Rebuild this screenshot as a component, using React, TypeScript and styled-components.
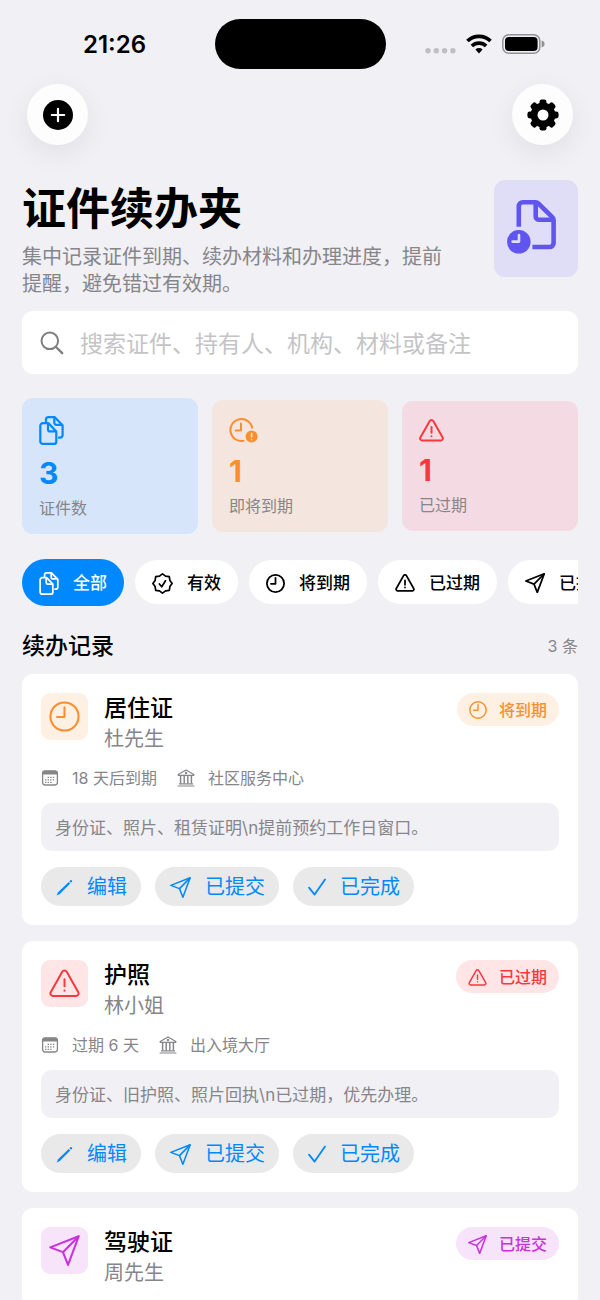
import React from "react";
import styled, { createGlobalStyle } from "styled-components";

const GlobalStyle = createGlobalStyle`
  *, *::before, *::after { box-sizing: border-box; }
  html, body { margin: 0; background: #f1f0f5; }
  body, button, input {
    font-family: Inter, "Noto Sans CJK SC", sans-serif;
  }
  h1, h2, h3, p { margin: 0; font-weight: 400; }
  button { border: 0; padding: 0; cursor: pointer; }
  svg { display: block; flex: none; }
`;

const color = {
  blue: "#0088ff",
  orange: "#fb8f2d",
  red: "#fa373c",
  purple: "#c832dc",
  indigo: "#6155f0",
  gray: "#868589",
};

/* ---------- icons ---------- */

type IconProps = { size: number; weight?: number };

const CopiesIcon = ({ size, weight = 2.2 }: IconProps) => (
  <svg width={Math.round((size * 25) / 29)} height={size} viewBox="0 0 25 29" fill="none" stroke="currentColor" strokeWidth={weight} strokeLinejoin="round" aria-hidden="true">
    <path d="M3.8 7.2H9.5l7.8 8.2v10a2.5 2.5 0 0 1-2.5 2.5h-11a2.5 2.5 0 0 1-2.500-2.500V9.700a2.500 2.500 0 0 1 2.500-2.500z" />
    <path d="M9 7.400v6a2 2 0 0 0 2 2h6" />
    <path d="M7 6.600V3.600A2.500 2.500 0 0 1 9.500 1.100h6l8.100 8.200v9.800a2.500 2.500 0 0 1-2.500 2.500h-2" />
    <path d="M15.300 1.200v5.600a2 2 0 0 0 2 2h6" />
  </svg>
);

const ClockIcon = ({ size, weight = 2 }: IconProps) => (
  <svg width={size} height={size} viewBox="0 0 30 30" fill="none" stroke="currentColor" strokeWidth={weight} strokeLinecap="round" strokeLinejoin="round" aria-hidden="true">
    <circle cx="15" cy="15" r="13.6" />
    <path d="M15 6v9.5H7.8" />
  </svg>
);

const ClockAlertIcon = () => (
  <svg width="29" height="25" viewBox="0 0 29 25" fill="none" stroke="currentColor" strokeWidth="2" strokeLinecap="round" strokeLinejoin="round" aria-hidden="true">
    <path d="M23.3 10.500A11 11 0 1 0 15.400 22.600" strokeLinecap="butt" />
    <path d="M12 5.400v7.200H6.600" />
    <circle cx="22.600" cy="18.600" r="6" fill="currentColor" stroke="none" />
    <path d="M22.600 15.400v3.400M22.600 21.600v.1" stroke="#f4e6de" strokeWidth="1.600" />
  </svg>
);

const WarningIcon = ({ size, weight = 2 }: IconProps) => (
  <svg width={size} height={Math.round((size * 23) / 25)} viewBox="0 0 25 23" fill="none" stroke="currentColor" strokeWidth={weight} strokeLinecap="round" strokeLinejoin="round" aria-hidden="true">
    <path d="M10.7 2.1a2.1 2.1 0 0 1 3.6 0l9.3 16.4a2.1 2.1 0 0 1-1.9 3.1H3.3a2.1 2.1 0 0 1-1.9-3.1z" />
    <path d="M12.5 8v5.8M12.5 17.2v.1" />
  </svg>
);

const sealPoints = Array.from({ length: 16 }, (_, i) => {
  const radius = i % 2 === 0 ? 9.6 : 8;
  const angle = (i * Math.PI) / 8;
  return `${(10.5 + radius * Math.sin(angle)).toFixed(2)},${(10.5 - radius * Math.cos(angle)).toFixed(2)}`;
}).join(" ");

const SealIcon = () => (
  <svg width="21" height="21" viewBox="0 0 21 21" fill="none" stroke="currentColor" strokeWidth="1.7" strokeLinecap="round" strokeLinejoin="round" aria-hidden="true">
    <polygon points={sealPoints} />
    <path d="M7.4 11l2.3 2.8 3.8-6" />
  </svg>
);

const PlaneIcon = ({ size, weight = 2 }: IconProps) => (
  <svg width={size} height={size} viewBox="0 0 30 30" fill="none" stroke="currentColor" strokeWidth={weight} strokeLinejoin="round" aria-hidden="true">
    <path d="M28.8 1.2L1.2 12l12.3 4.6L18.4 29z" />
    <path d="M28.8 1.2L13.5 16.6" />
  </svg>
);

const PencilIcon = () => (
  <svg width="17" height="17" viewBox="0 0 17 17" fill="currentColor" aria-hidden="true">
    <path d="M.6 16.4l1.500-3.200L12.700 2.900l1.500 1.500L3.800 14.900z" />
    <path d="M13.400 2.200l.9-.9a1 1 0 0 1 1.400 0l.2.2a1 1 0 0 1 0 1.400l-.9.9z" />
  </svg>
);

const CheckIcon = () => (
  <svg width="18" height="18" viewBox="0 0 18 18" fill="none" stroke="currentColor" strokeWidth="1.8" strokeLinecap="round" strokeLinejoin="round" aria-hidden="true">
    <path d="M1 9.6l5.6 7L17 1.4" />
  </svg>
);

const CalendarIcon = () => (
  <svg width="18" height="16" viewBox="0 0 18 16" fill="none" aria-hidden="true">
    <rect x="1.6" y=".8" width="14.8" height="14.2" rx="2.4" stroke="currentColor" strokeWidth="1.3" />
    <path d="M1.6 4.6V3.2A2.4 2.4 0 0 1 4 .8h10a2.4 2.4 0 0 1 2.4 2.4v1.4z" fill="currentColor" />
    <path d="M6.6 7.4h7M4 9.9h9.6M4 12.4h7" stroke="currentColor" strokeWidth="1.3" strokeDasharray="1.4 1.2" />
  </svg>
);

const InstitutionIcon = () => (
  <svg width="18" height="18" viewBox="0 0 18 18" fill="none" stroke="currentColor" strokeWidth="1.2" strokeLinejoin="round" aria-hidden="true">
    <path d="M1.2 5.4L9 1l7.8 4.4v.9H1.2z" />
    <path d="M3.6 6.4v8.2M7.2 6.4v8.2M10.8 6.4v8.2M14.4 6.4v8.2" strokeWidth="1.5" />
    <path d="M2 14.8h14M.6 17h16.8" />
    <circle cx="9" cy="4" r=".6" />
  </svg>
);

const SearchIcon = () => (
  <svg width="24" height="24" viewBox="0 0 24 24" fill="none" stroke="#7f7f82" strokeWidth="2" strokeLinecap="round" aria-hidden="true">
    <circle cx="9.8" cy="9.8" r="8.3" />
    <path d="M16 16l6.2 6.2" strokeWidth="2.4" />
  </svg>
);

const DocClockIcon = () => (
  <svg width="49" height="54" viewBox="0 0 49 54" fill="none" stroke="currentColor" strokeWidth="4.6" strokeLinejoin="round" aria-hidden="true">
    <path d="M11.8 26.8V6.3a4 4 0 0 1 4-4h12.9c1 0 1.9.4 2.6 1.1l14.2 14c.7.7 1.1 1.6 1.1 2.6v23a4 4 0 0 1-4 4H25.4" />
    <path d="M28.7 3v13.4a3.4 3.4 0 0 0 3.4 3.4H46" />
    <circle cx="11.8" cy="41.8" r="11.8" fill="currentColor" stroke="none" />
    <path d="M12 35v6.6H5.6" stroke="#e0def6" strokeWidth="2.6" strokeLinecap="round" />
  </svg>
);

const PlusDiscIcon = () => (
  <svg width="30" height="30" viewBox="0 0 30 30" aria-hidden="true">
    <circle cx="15" cy="15" r="15" fill="#000" />
    <path d="M15 8.8v12.4M8.8 15h12.400" stroke="#fdfdfe" strokeWidth="2.2" strokeLinecap="round" />
  </svg>
);

const GearIcon = () => (
  <svg width="32" height="32" viewBox="0 0 32 32" aria-hidden="true">
    {[0, 45, 90, 135].map((angle) => (
      <rect key={angle} x="12.5" y=".4" width="7" height="31.2" rx="2.4" transform={`rotate(${angle} 16 16)`} />
    ))}
    <circle cx="16" cy="16" r="12.4" />
    <circle cx="16" cy="16" r="5.5" fill="#fdfdfe" />
  </svg>
);

const SignalDots = () => (
  <svg width="31" height="20" viewBox="0 0 31 20" fill="#bfbfc4" aria-hidden="true">
    {[3, 11.3, 19.6, 27.9].map((x) => (
      <circle key={x} cx={x} cy="16.7" r="2.7" />
    ))}
  </svg>
);

const WifiIcon = () => (
  <svg width="26" height="20" viewBox="0 0 26 20" fill="none" stroke="#000" strokeWidth="3.7" aria-hidden="true">
    <path d="M1.5 7a16.4 16.4 0 0 1 23 0" />
    <path d="M5.9 12a10.1 10.1 0 0 1 14.2 0" />
    <path d="M13 19.4l-3.6-3.8a5.1 5.1 0 0 1 7.2 0z" fill="#000" stroke="none" />
  </svg>
);

const BatteryIcon = () => (
  <svg width="43" height="20" viewBox="0 0 43 20" aria-hidden="true">
    <rect x=".8" y=".8" width="37" height="18.4" rx="6" fill="none" stroke="#929296" strokeWidth="1.5" />
    <rect x="3" y="3" width="32.6" height="14" rx="4" />
    <path d="M39.6 6.6c2 .6 3 1.8 3 3.4s-1 2.8-3 3.4z" fill="#929296" />
  </svg>
);

/* ---------- page ---------- */

const Screen = styled.div`
  height: 100vh;
  overflow-y: auto;
  scrollbar-width: none;
  background: #f1f0f5;
  color: #000;
`;

const StatusBar = styled.div`
  display: grid;
  grid-template-columns: 1fr auto 1fr;
  align-items: center;
  padding: 19px 55px 0 83px;
`;

const Time = styled.time`
  padding-top: 2px;
  font-size: 24px;
  line-height: 30px;
  font-weight: 600;
`;

const Island = styled.div`
  width: 171px;
  height: 50px;
  margin-right: 28px;
  border-radius: 25px;
  background: #000;
`;

const StatusIcons = styled.div`
  display: flex;
  justify-content: flex-end;
  gap: 10px;
`;

const Toolbar = styled.nav`
  display: flex;
  justify-content: space-between;
  padding: 15px 27px 0;
`;

const RoundButton = styled.button`
  display: grid;
  place-items: center;
  width: 61px;
  height: 61px;
  border-radius: 50%;
  background: #fdfdfe;
  box-shadow: 0 8px 28px rgba(0, 0, 0, 0.07);
`;

const Content = styled.main`
  padding: 35px 22px 22px;
`;

const Hero = styled.header`
  display: flex;
  align-items: flex-start;
  justify-content: space-between;
  gap: 36px;
`;

const Title = styled.h1`
  font-size: 44px;
  line-height: 58px;
  font-weight: 700;
`;

const Subtitle = styled.p`
  margin-top: 6px;
  font-size: 20px;
  line-height: 27px;
  color: ${color.gray};
`;

const HeroBadge = styled.div`
  flex: none;
  display: grid;
  place-items: center;
  width: 84px;
  height: 97px;
  padding-right: 10px;
  padding-bottom: 4px;
  border-radius: 11px;
  background: #e0def6;
  color: ${color.indigo};
`;

const SearchBox = styled.label`
  display: flex;
  align-items: center;
  gap: 16px;
  height: 63px;
  margin-top: 13px;
  padding: 0 18px;
  border-radius: 11px;
  background: #fff;
`;

const SearchInput = styled.input`
  flex: 1;
  min-width: 0;
  padding: 2px 0 0;
  border: 0;
  outline: 0;
  background: none;
  font-size: 23px;
  line-height: 32px;
  &::placeholder { color: #c4c4c6; opacity: 1; }
`;

const Stats = styled.section`
  display: grid;
  grid-template-columns: repeat(3, 1fr);
  align-items: center;
  gap: 14px;
  margin-top: 24px;
`;

const StatCard = styled.div<{ $bg: string; $tint: string }>`
  padding: 18px 17px 15px;
  border-radius: 11px;
  background: ${(p) => p.$bg};
  color: ${(p) => p.$tint};
`;

const StatValue = styled.div`
  margin-top: 9px;
  font-size: 30px;
  line-height: 38px;
  font-weight: 700;
`;

const StatLabel = styled.div`
  margin-top: 5px;
  font-size: 16px;
  line-height: 22px;
  color: ${color.gray};
`;

const Chips = styled.div`
  display: flex;
  align-items: center;
  gap: 11px;
  height: 48px;
  margin-top: 24px;
  overflow-x: auto;
  scrollbar-width: none;
`;

const Chip = styled.button<{ $active?: boolean }>`
  flex: none;
  display: flex;
  align-items: center;
  gap: 14px;
  height: ${(p) => (p.$active ? 47 : 44)}px;
  padding: 2px 17px 0;
  border-radius: 24px;
  background: ${(p) => (p.$active ? color.blue : "#fff")};
  color: ${(p) => (p.$active ? "#fff" : "#000")};
  font-size: 17px;
  line-height: 24px;
  font-weight: 500;
`;

const ListHeader = styled.div`
  display: flex;
  align-items: center;
  justify-content: space-between;
  margin-top: 24px;
`;

const ListTitle = styled.h2`
  font-size: 23px;
  line-height: 32px;
  font-weight: 500;
`;

const Count = styled.span`
  font-size: 16px;
  line-height: 22px;
  color: ${color.gray};
`;

const List = styled.div`
  display: flex;
  flex-direction: column;
  gap: 16px;
  margin-top: 12px;
`;

const Card = styled.article`
  display: flex;
  flex-direction: column;
  gap: 16px;
  min-height: 160px;
  padding: 19px;
  border-radius: 11px;
  background: #fff;
`;

const CardHeader = styled.div`
  display: flex;
  align-items: flex-start;
  gap: 16px;
`;

const Tile = styled.div<{ $bg: string; $tint: string }>`
  display: grid;
  place-items: center;
  width: 47px;
  height: 47px;
  border-radius: 9px;
  background: ${(p) => p.$bg};
  color: ${(p) => p.$tint};
`;

const CardText = styled.div`
  flex: 1;
  min-width: 0;
`;

const CardTitle = styled.h3`
  font-size: 23px;
  line-height: 30px;
  font-weight: 500;
`;

const Holder = styled.p`
  margin-top: 2px;
  font-size: 20px;
  line-height: 28px;
  color: ${color.gray};
`;

const Badge = styled.span<{ $bg: string; $tint: string }>`
  display: flex;
  align-items: center;
  gap: 12px;
  height: 33px;
  padding: 1px 12px 0;
  border-radius: 17px;
  background: ${(p) => p.$bg};
  color: ${(p) => p.$tint};
  font-size: 16px;
  line-height: 22px;
  font-weight: 500;
`;

const Meta = styled.div`
  display: flex;
  gap: 20px;
  color: ${color.gray};
  font-size: 16px;
  line-height: 18px;
`;

const MetaItem = styled.span`
  display: flex;
  align-items: center;
  gap: 13px;
`;

const Note = styled.p`
  padding: 13px 14px 11px;
  border-radius: 11px;
  background: #f1f0f5;
  color: ${color.gray};
  font-size: 17px;
  line-height: 24px;
`;

const Actions = styled.div`
  display: flex;
  gap: 14px;
`;

const ActionButton = styled.button`
  display: flex;
  align-items: center;
  gap: 14px;
  height: 39px;
  padding: 1px 14px 0 15px;
  border-radius: 20px;
  background: #e9e9ea;
  color: ${color.blue};
  font-size: 20px;
  line-height: 28px;
`;

type Status = "soon" | "expired" | "submitted";

const statuses = {
  soon: { label: "将到期", tint: color.orange, bg: "#fff0e4", Icon: ClockIcon, tile: 31, small: 18 },
  expired: { label: "已过期", tint: color.red, bg: "#ffe5e6", Icon: WarningIcon, tile: 31, small: 19 },
  submitted: { label: "已提交", tint: color.purple, bg: "#f7e4fb", Icon: PlaneIcon, tile: 31, small: 19 },
};

type RecordItem = {
  title: string;
  holder: string;
  status: Status;
  details?: { due: string; place: string; note: string };
};

const records: RecordItem[] = [
  {
    title: "居住证",
    holder: "杜先生",
    status: "soon",
    details: {
      due: "18 天后到期",
      place: "社区服务中心",
      note: "身份证、照片、租赁证明\\n提前预约工作日窗口。",
    },
  },
  {
    title: "护照",
    holder: "林小姐",
    status: "expired",
    details: {
      due: "过期 6 天",
      place: "出入境大厅",
      note: "身份证、旧护照、照片回执\\n已过期，优先办理。",
    },
  },
  { title: "驾驶证", holder: "周先生", status: "submitted" },
];

const RecordCard = ({ record }: { record: RecordItem }) => {
  const { label, tint, bg, Icon, tile, small } = statuses[record.status];
  const expired = record.status === "expired";
  return (
    <Card>
      <CardHeader>
        <Tile $bg={bg} $tint={tint}>
          <Icon size={tile} weight={expired ? 1.6 : 2} />
        </Tile>
        <CardText>
          <CardTitle>{record.title}</CardTitle>
          <Holder>{record.holder}</Holder>
        </CardText>
        <Badge $bg={bg} $tint={tint}>
          <Icon size={small} weight={expired ? 2 : 2.4} />
          {label}
        </Badge>
      </CardHeader>
      {record.details && (
        <>
          <Meta>
            <MetaItem>
              <CalendarIcon />
              {record.details.due}
            </MetaItem>
            <MetaItem>
              <InstitutionIcon />
              {record.details.place}
            </MetaItem>
          </Meta>
          <Note>{record.details.note}</Note>
          <Actions>
            <ActionButton type="button">
              <PencilIcon />
              编辑
            </ActionButton>
            <ActionButton type="button">
              <PlaneIcon size={21} weight={2.2} />
              已提交
            </ActionButton>
            <ActionButton type="button">
              <CheckIcon />
              已完成
            </ActionButton>
          </Actions>
        </>
      )}
    </Card>
  );
};

export default function App() {
  return (
    <Screen>
      <GlobalStyle />
      <StatusBar>
        <Time>21:26</Time>
        <Island />
        <StatusIcons>
          <SignalDots />
          <WifiIcon />
          <BatteryIcon />
        </StatusIcons>
      </StatusBar>
      <Toolbar>
        <RoundButton type="button" aria-label="添加">
          <PlusDiscIcon />
        </RoundButton>
        <RoundButton type="button" aria-label="设置">
          <GearIcon />
        </RoundButton>
      </Toolbar>
      <Content>
        <Hero>
          <div>
            <Title>证件续办夹</Title>
            <Subtitle>集中记录证件到期、续办材料和办理进度，提前提醒，避免错过有效期。</Subtitle>
          </div>
          <HeroBadge>
            <DocClockIcon />
          </HeroBadge>
        </Hero>
        <SearchBox>
          <SearchIcon />
          <SearchInput type="search" placeholder="搜索证件、持有人、机构、材料或备注" />
        </SearchBox>
        <Stats>
          <StatCard $bg="#d6e5f9" $tint={color.blue}>
            <CopiesIcon size={29} />
            <StatValue>3</StatValue>
            <StatLabel>证件数</StatLabel>
          </StatCard>
          <StatCard $bg="#f4e6de" $tint={color.orange}>
            <ClockAlertIcon />
            <StatValue>1</StatValue>
            <StatLabel>即将到期</StatLabel>
          </StatCard>
          <StatCard $bg="#f4dbe3" $tint={color.red}>
            <WarningIcon size={25} />
            <StatValue>1</StatValue>
            <StatLabel>已过期</StatLabel>
          </StatCard>
        </Stats>
        <Chips>
          <Chip type="button" $active>
            <CopiesIcon size={23} />
            全部
          </Chip>
          <Chip type="button">
            <SealIcon />
            有效
          </Chip>
          <Chip type="button">
            <ClockIcon size={19} weight={2.8} />
            将到期
          </Chip>
          <Chip type="button">
            <WarningIcon size={20} weight={2.2} />
            已过期
          </Chip>
          <Chip type="button">
            <PlaneIcon size={20} weight={2.6} />
            已提交
          </Chip>
        </Chips>
        <ListHeader>
          <ListTitle>续办记录</ListTitle>
          <Count>3 条</Count>
        </ListHeader>
        <List>
          {records.map((record) => (
            <RecordCard key={record.title} record={record} />
          ))}
        </List>
      </Content>
    </Screen>
  );
}
